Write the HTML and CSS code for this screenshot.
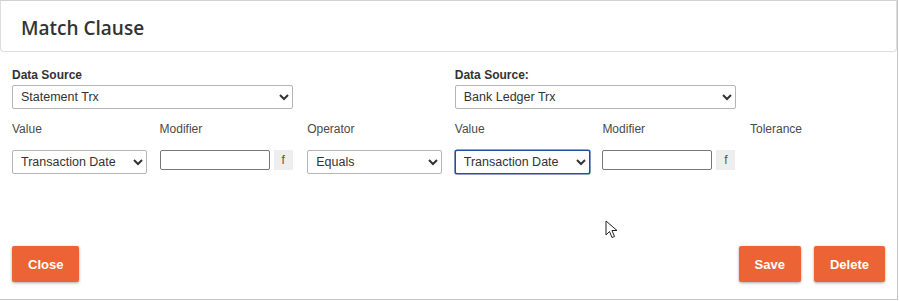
FILE: index.html
```html
<!DOCTYPE html>
<html>
<head>
<meta charset="utf-8">
<link rel="stylesheet" href="styles.css">
</head>
<body>
<div class="modal">
  <div class="header"><h1 class="title">Match Clause</h1></div>
  <div class="form">
    <div class="grid">
      <div class="field span2">
        <label class="label-strong">Data Source</label>
        <select class="select wide"><option>Statement Trx</option></select>
      </div>
      <div class="field span2 col4">
        <label class="label-strong">Data Source:</label>
        <select class="select wide"><option>Bank Ledger Trx</option></select>
      </div>
    </div>
    <div class="grid row2">
      <div class="field">
        <label class="label">Value</label>
        <select class="select small"><option>Transaction Date</option></select>
      </div>
      <div class="field">
        <label class="label">Modifier</label>
        <div class="mod"><input class="input" type="text"><span class="fbtn">f</span></div>
      </div>
      <div class="field">
        <label class="label">Operator</label>
        <select class="select small"><option>Equals</option></select>
      </div>
      <div class="field">
        <label class="label">Value</label>
        <select class="select small focused"><option>Transaction Date</option></select>
      </div>
      <div class="field">
        <label class="label">Modifier</label>
        <div class="mod"><input class="input" type="text"><span class="fbtn">f</span></div>
      </div>
      <div class="field">
        <label class="label">Tolerance</label>
      </div>
    </div>
  </div>
  <div class="footer">
    <button class="btn">Close</button>
    <div class="right">
      <button class="btn">Save</button>
      <button class="btn">Delete</button>
    </div>
  </div>
  <svg class="cursor" width="14" height="20" viewBox="0 0 14 20"><path d="M1 1 L1 15 L4.5 11.5 L7 17.5 L9.5 16.5 L7 10.5 L12 10.5 Z" fill="#fff" stroke="#222" stroke-width="1" stroke-linejoin="round"/></svg>
</div>
</body>
</html>
```
FILE: styles.css
```css
html, body { margin: 0; padding: 0; background: #fff; }
body { font-family: "Liberation Sans", Arial, sans-serif; color: #333; }
.modal {
  position: relative;
  width: 897px;
  height: 298px;
  border-top: 1px solid #d0d0d0;
  border-right: 1px solid #c4c4c4;
  border-bottom: 1px solid #c4c4c4;
  background: #fff;
}
.header {
  height: 50px;
  border: 1px solid #ddd;
  border-top: none;
  border-radius: 0 0 4px 4px;
  display: flex;
  align-items: center;
  padding-left: 20px;
}
.title {
  margin: 0;
  font-family: "Open Sans", sans-serif;
  font-weight: 600;
  font-size: 19px;
  color: #333;
  padding-top: 3px;
}
.form { padding: 16px 0 0 12px; }
.grid {
  display: grid;
  grid-template-columns: repeat(6, 147.6px);
}
.row2 { margin-top: 13px; }
.field { display: flex; flex-direction: column; }
.span2 { grid-column: span 2; }
.col4 { grid-column: 4 / span 2; }
.label-strong { font-size: 12px; font-weight: bold; color: #333; height: 14px; line-height: 14px; margin-bottom: 3px; }
.label { font-size: 12px; color: #4a4a4a; height: 14px; line-height: 14px; margin-bottom: 14px; }
.select {
  font-family: "Liberation Sans", Arial, sans-serif;
  font-size: 12.5px;
  color: #333;
  height: 24px;
  border: 1px solid #b5b5b5;
  border-radius: 2px;
  background: #fff;
  padding: 0 4px;
  outline: none;
}
.wide { width: 281px; }
.small { width: 135px; }
.focused { border: 1px solid #1f4f9e; box-shadow: 0 0 0 0.6px #1f4f9e; }
.mod { display: flex; align-items: center; gap: 4px; }
.input {
  width: 110px;
  height: 20px;
  box-sizing: border-box;
  border: 1px solid #777;
  border-radius: 2px;
  padding: 0 4px;
  margin: 0;
}
.fbtn {
  width: 19px;
  height: 20px;
  background: #eee;
  color: #555;
  font-size: 12px;
  display: flex;
  align-items: center;
  justify-content: center;
}
.footer {
  position: absolute;
  left: 12px;
  right: 12px;
  top: 245px;
  display: flex;
  justify-content: space-between;
}
.right { display: flex; gap: 13px; }
.btn {
  height: 36px;
  padding: 0 16px;
  border: none;
  border-radius: 2px;
  background: #ec6435;
  color: #fff;
  font-family: "Liberation Sans", Arial, sans-serif;
  font-weight: bold;
  font-size: 13px;
  box-shadow: 0 1px 3px rgba(0,0,0,0.35);
}
.cursor { position: absolute; left: 605px; top: 219px; }
```
